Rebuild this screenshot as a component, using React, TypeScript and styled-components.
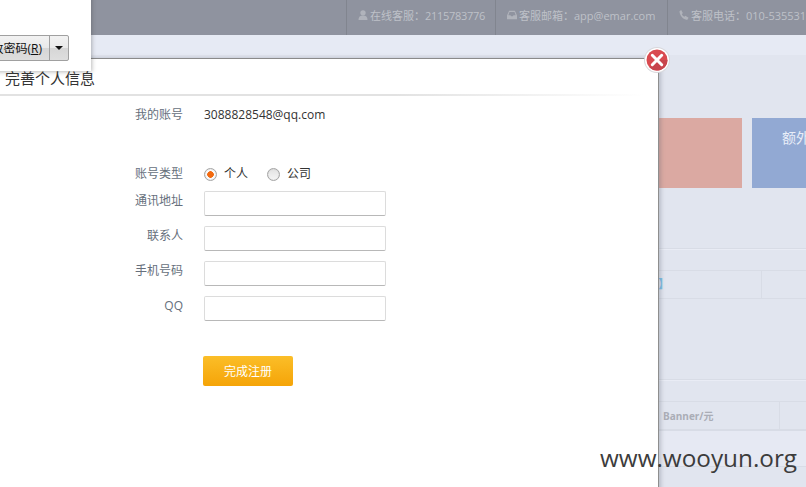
import React from 'react';
import styled, { createGlobalStyle } from 'styled-components';

const GlobalStyle = createGlobalStyle`
  html, body {
    margin: 0;
    padding: 0;
    height: 100%;
    overflow: hidden;
    background: #e1e5ef;
  }
  * { box-sizing: border-box; }
`;

const FONT = `"Open Sans", "Noto Sans CJK SC", sans-serif`;

const Page = styled.div`
  position: relative;
  width: 806px;
  height: 487px;
  overflow: hidden;
  background: #e1e5ef;
  font-family: ${FONT};
  font-size: 12px;
`;

const TopBar = styled.div`
  height: 35px;
  background: #8f939f;
  display: flex;
  justify-content: flex-start;
  padding-left: 346px;
`;

const TopItem = styled.div<{ $width: number }>`
  width: ${(p) => p.$width}px;
  flex: none;
  height: 35px;
  border-left: 1px solid #81858f;
  display: flex;
  align-items: center;
  gap: 2px;
  padding: 0 0 6px 11px;
  color: #bec1c8;
  font-size: 11px;
  white-space: nowrap;
  svg {
    flex: none;
  }
`;

const Digits = styled.span`
  letter-spacing: -0.3px;
`;

const SubBar = styled.div`
  height: 20px;
  background: #e6eaf4;
`;

const Cards = styled.div`
  display: flex;
  gap: 10px;
  padding: 63px 0 0 612px;
`;

const Card = styled.div<{ $bg: string }>`
  width: 130px;
  height: 70px;
  flex: none;
  background: ${(p) => p.$bg};
  color: #e9eef8;
  font-size: 14px;
  line-height: 20px;
  padding: 10px 0 0 30px;
  white-space: nowrap;
  overflow: hidden;
`;

const TableGroup = styled.div<{ $top: number }>`
  margin-top: ${(p) => p.$top}px;
`;

const TableHead = styled.div`
  height: 22px;
  border-top: 1px solid #d8dce6;
  box-shadow: inset 0 1px 0 #e9ecf5;
`;

const TableRow = styled.div<{ $height: number; $bg?: string }>`
  height: ${(p) => p.$height}px;
  border-top: 1px solid #d8dce6;
  border-bottom: 1px solid #d8dce6;
  background: ${(p) => p.$bg || 'transparent'};
  display: flex;
  padding-left: 658px;
`;

const TableCell = styled.div<{ $width: number; $pad?: number }>`
  width: ${(p) => p.$width}px;
  flex: none;
  border-right: 1px solid #d8dce6;
  color: #aaadb6;
  font-size: 10px;
  line-height: 14px;
  font-weight: bold;
  padding: 7px 0 0 ${(p) => p.$pad ?? 5}px;
  white-space: nowrap;
`;

const LinkEnd = styled.span`
  color: #7cc0e8;
  font-size: 12px;
  font-weight: bold;
`;

const Modal = styled.div`
  position: absolute;
  left: -20px;
  top: 58px;
  width: 679px;
  height: 440px;
  background: #fff;
  border-top: 1px solid #8a8a8a;
  border-right: 1px solid #8e8e8e;
  box-shadow: 2px 0 4px rgba(90, 95, 110, 0.3);
  padding-left: 20px;
`;

const ModalHead = styled.div`
  height: 37px;
  padding: 10px 0 0 5px;
  font-size: 15px;
  line-height: 18px;
  color: #333;
  background: linear-gradient(90deg, #e2e2e2 0%, #e2e2e2 60%, #fff 98%) no-repeat left bottom / 100% 2px;
`;

const Form = styled.div`
  display: flex;
  flex-direction: column;
  padding-top: 9px;
`;

const Row = styled.div<{ $height: number }>`
  display: flex;
  height: ${(p) => p.$height}px;
`;

const Label = styled.div`
  width: 183px;
  flex: none;
  padding-top: 1px;
  text-align: right;
  color: #666f7c;
  font-size: 12px;
  line-height: 18px;
`;

const Value = styled.div`
  margin-left: 21px;
  color: #333;
  font-size: 12px;
  line-height: 18px;
  padding-top: 1px;
`;

const Radios = styled.div`
  margin-left: 21px;
  display: flex;
  align-items: center;
  height: 20px;
`;

const RadioDot = styled.span<{ $on?: boolean }>`
  width: 13px;
  height: 13px;
  border-radius: 50%;
  border: 1px solid #a5a5a5;
  background: ${(p) =>
    p.$on
      ? 'radial-gradient(circle, #f26a10 0 3px, #fafafa 3.6px)'
      : 'linear-gradient(#e2e2e2, #f6f6f6)'};
  box-shadow: inset 0 0 1px #bbb;
  flex: none;
`;

const RadioText = styled.span`
  margin: 0 19px 0 7px;
  color: #333;
  font-size: 12px;
  line-height: 16px;
`;

const Input = styled.input`
  display: block;
  margin-left: 21px;
  width: 182px;
  height: 25px;
  border: 1px solid #dcdcdc;
  border-bottom-color: #b8b8b8;
  border-radius: 2px;
  background: #fff;
  padding: 0 5px;
  outline: none;
`;

const Submit = styled.button`
  margin: 25px 0 0 203px;
  width: 90px;
  height: 30px;
  border: none;
  border-radius: 2px;
  background: linear-gradient(#fbbe28, #f5a408);
  color: #fff;
  font-family: ${FONT};
  font-size: 12px;
  padding: 0;
`;

const CloseButton = styled.button`
  position: absolute;
  left: 644px;
  top: 47px;
  width: 26px;
  height: 26px;
  padding: 0;
  border: none;
  background: none;
  display: block;
`;

const Popup = styled.div`
  position: absolute;
  left: -10px;
  top: -10px;
  width: 101px;
  height: 81px;
  background: #fff;
  box-shadow: 1px 1px 4px rgba(60, 60, 60, 0.35);
`;

const SplitButton = styled.div`
  position: absolute;
  left: -31px;
  top: 35px;
  display: flex;
  height: 26px;
  border: 1px solid #a0a0a0;
  border-radius: 2px;
  background: linear-gradient(#f2f2f2 0%, #e9e9e9 50%, #d6d6d6 52%, #dedede 100%);
  font-size: 12px;
  color: #111;
`;

const SplitMain = styled.div`
  width: 80px;
  display: flex;
  align-items: center;
  justify-content: flex-end;
  padding-right: 7px;
  white-space: nowrap;
  border-right: 1px solid #a0a0a0;
`;

const SplitArrow = styled.div`
  width: 18px;
  display: flex;
  align-items: center;
  justify-content: center;
  &::after {
    content: '';
    border-left: 4px solid transparent;
    border-right: 4px solid transparent;
    border-top: 4px solid #111;
  }
`;

const Watermark = styled.div`
  position: absolute;
  left: 600px;
  top: 441px;
  font-family: "Open Sans", sans-serif;
  font-size: 24.3px;
  line-height: 34px;
  color: #3c3c3c;
  white-space: nowrap;
`;

const UserIcon = () => (
  <svg width="10" height="10" viewBox="0 0 12 12" fill="#b0b3bb">
    <circle cx="6" cy="3.4" r="3.2" />
    <path d="M.6 12c0-3.8 1.8-5.4 5.4-5.4s5.4 1.6 5.4 5.4z" />
  </svg>
);

const MailIcon = () => (
  <svg width="10" height="10" viewBox="0 0 12 12" fill="#b0b3bb">
    <path d="M2.5 1h7L12 6.5V11H0V6.5zM3 2.4 1.6 6.4h2.6l.8 1.2h2l.8-1.2h2.6L9 2.4z" />
  </svg>
);

const PhoneIcon = () => (
  <svg width="10" height="10" viewBox="0 0 12 12" fill="#b0b3bb">
    <path d="M2.6 0 4.6 3.6 3.4 5c.6 1.4 1.6 2.5 3 3.2l1.2-1.2L11.5 9.2 9.8 12C5 11.6.6 6.6.6 1.6z" />
  </svg>
);

const CloseIcon = () => (
  <svg width="26" height="26" viewBox="0 0 26 26">
    <circle cx="13" cy="13" r="13" fill="#d8d8dc" />
    <circle cx="13" cy="13" r="12" fill="#fff" />
    <circle cx="13" cy="13" r="10.5" fill="#d94a50" />
    <path d="M13 13 L23.5 13 A10.5 10.5 0 0 1 5.6 20.4 Z" fill="#c8444c" />
    <path d="M8.3 8.3 17.7 17.7M17.7 8.3 8.3 17.7" stroke="#fff" strokeWidth="3" strokeLinecap="round" />
  </svg>
);

export default function App() {
  return (
    <>
      <GlobalStyle />
      <Page>
        <TopBar>
          <TopItem $width={149}>
            <UserIcon />
            <span>
              在线客服：<Digits>2115783776</Digits>
            </span>
          </TopItem>
          <TopItem $width={172}>
            <MailIcon />
            <span>客服邮箱：app@emar.com</span>
          </TopItem>
          <TopItem $width={140}>
            <PhoneIcon />
            <span>客服电话：010-53553196</span>
          </TopItem>
        </TopBar>
        <SubBar />
        <Cards>
          <Card $bg="#dba9a2" />
          <Card $bg="#92a9d3">额外收入</Card>
        </Cards>
        <TableGroup $top={60}>
          <TableHead />
          <TableRow $height={29}>
            <TableCell $width={104} $pad={0}>
              <LinkEnd>】</LinkEnd>
            </TableCell>
          </TableRow>
        </TableGroup>
        <TableGroup $top={80}>
          <TableHead />
          <TableRow $height={29}>
            <TableCell $width={122}>Banner/元</TableCell>
          </TableRow>
          <TableRow $height={37} $bg="#e6e9f3" />
        </TableGroup>
        <Modal>
          <ModalHead>完善个人信息</ModalHead>
          <Form>
            <Row $height={59}>
              <Label>我的账号</Label>
              <Value>3088828548@qq.com</Value>
            </Row>
            <Row $height={27}>
              <Label>账号类型</Label>
              <Radios>
                <RadioDot $on />
                <RadioText>个人</RadioText>
                <RadioDot />
                <RadioText>公司</RadioText>
              </Radios>
            </Row>
            <Row $height={35}>
              <Label>通讯地址</Label>
              <Input />
            </Row>
            <Row $height={35}>
              <Label>联系人</Label>
              <Input />
            </Row>
            <Row $height={35}>
              <Label>手机号码</Label>
              <Input />
            </Row>
            <Row $height={35}>
              <Label>QQ</Label>
              <Input />
            </Row>
            <Submit>完成注册</Submit>
          </Form>
        </Modal>
        <CloseButton>
          <CloseIcon />
        </CloseButton>
        <Popup />
        <SplitButton>
          <SplitMain>
            <span>
              修改密码(<u>R</u>)
            </span>
          </SplitMain>
          <SplitArrow />
        </SplitButton>
        <Watermark>www.wooyun.org</Watermark>
      </Page>
    </>
  );
}
